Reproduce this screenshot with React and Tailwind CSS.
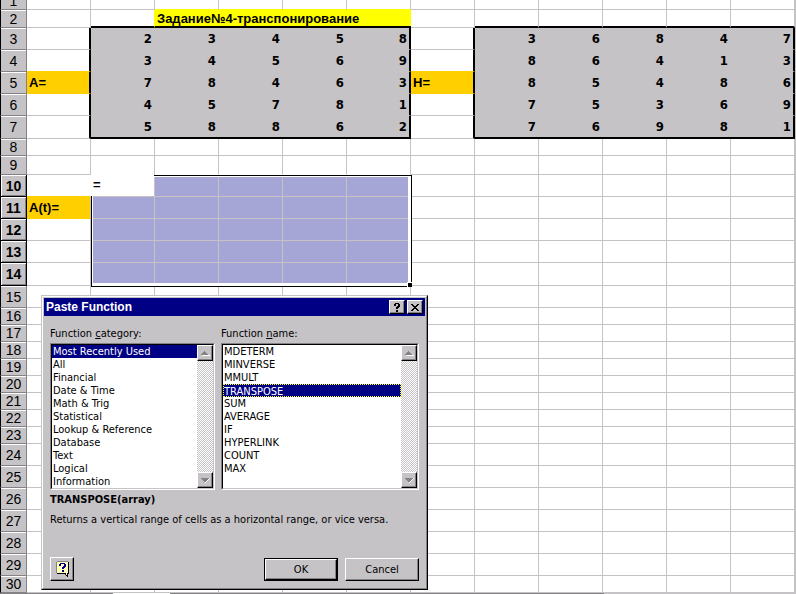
import React, { useState } from "react";
import clsx from "clsx";

const ROW_HEIGHTS = [
  18, 18, 22, 22, 22, 22, 23, 17, 19, 22, 22, 22, 22, 23, 22, 17, 17, 17, 17,
  17, 17, 17, 17, 22, 22, 22, 22, 22, 22, 17,
];
const COLUMNS = ["A", "B", "C", "D", "E", "F", "G", "H", "I", "J", "K", "L", "M"];

const MATRIX_A = [
  [2, 3, 4, 5, 8],
  [3, 4, 5, 6, 9],
  [7, 8, 4, 6, 3],
  [4, 5, 7, 8, 1],
  [5, 8, 8, 6, 2],
];
const MATRIX_H = [
  [3, 6, 8, 4, 7],
  [8, 6, 4, 1, 3],
  [8, 5, 4, 8, 6],
  [7, 5, 3, 6, 9],
  [7, 6, 9, 8, 1],
];
const LABELS = { A5: "A=", G5: "H=", A11: "A(t)=" };

const CATEGORIES = [
  "Most Recently Used",
  "All",
  "Financial",
  "Date & Time",
  "Math & Trig",
  "Statistical",
  "Lookup & Reference",
  "Database",
  "Text",
  "Logical",
  "Information",
];
const FUNCTIONS = [
  "MDETERM",
  "MINVERSE",
  "MMULT",
  "TRANSPOSE",
  "SUM",
  "AVERAGE",
  "IF",
  "HYPERLINK",
  "COUNT",
  "MAX",
];

const RAISED =
  "bg-[#c6c3c6] border border-t-white border-l-white border-r-black border-b-black shadow-[inset_-1px_-1px_0_#848284]";

const RowHeader = ({ row }) => {
  const active = row >= 10 && row <= 14;
  return (
    <th
      scope="row"
      className={clsx(
        "p-0 border-l border-l-black border-r border-b bg-[#c6c3c6] text-center text-sm leading-4 font-['Liberation_Sans',sans-serif]",
        active
          ? "font-bold border-r-black border-b-black shadow-[inset_1px_1px_0_#fff,inset_-1px_-1px_0_#848284]"
          : "font-normal border-r-[#848284] border-b-[#848284] shadow-[inset_0_1px_0_#fff]",
      )}
    >
      {row}
    </th>
  );
};

// frame of the selected range, anchored to its first cell
const Selection = () => (
  <div className="absolute left-0 top-0 z-10 w-[321px] h-[112px] border border-black">
    <div className="h-full border-t border-l border-r-3 border-b-3 border-white" />
    <div className="absolute -left-px -top-px w-[63px] h-[21px] bg-white pl-0.5 text-left leading-5 font-['Liberation_Sans',sans-serif]">
      =
    </div>
    <div className="absolute -right-px -bottom-px w-[5px] h-[5px] border-t border-l border-white bg-black" />
  </div>
);

const Cell = ({ col, row }) => {
  const letter = COLUMNS[col];
  const label = LABELS[letter + row];
  const inRows = row >= 3 && row <= 7;
  const inA = inRows && col >= 1 && col <= 5;
  const inH = inRows && col >= 7 && col <= 11;
  const inMatrix = inA || inH;
  const inSelection = row >= 10 && row <= 14 && col >= 1 && col <= 5;
  const matrixCol = (col >= 1 && col <= 5) || (col >= 7 && col <= 11);
  const matrixSide = col === 0 || col === 5 || col === 6 || col === 11;

  let value = label;
  if (inA) value = MATRIX_A[row - 3][col - 1];
  if (inH) value = MATRIX_H[row - 3][col - 7];

  // right edge
  let right = "border-r border-r-[#c6c3c6]";
  if (inRows && matrixSide) {
    right = "border-r-2 border-r-black";
  } else if (inMatrix) {
    right = "";
  } else if (row === 2 && col === 1) {
    right = "border-r border-r-[#ffff00]";
  } else if (row === 10 && col === 0) {
    right = "border-r border-r-white";
  }

  // bottom edge
  let bottom = "border-b border-b-[#c6c3c6]";
  if (matrixCol && (row === 2 || row === 7)) {
    bottom = "border-b-2 border-b-black";
  } else if (LABELS[letter + (row + 1)] || label) {
    bottom = "border-b border-b-[#ffcf00]";
  } else if (row === 9 && col >= 1 && col <= 5) {
    bottom = "border-b border-b-white";
  } else if (row === 1 && col >= 2 && col <= 5) {
    bottom = "border-b border-b-[#ffff00]";
  }

  return (
    <td
      className={clsx(
        "p-0 leading-4",
        right,
        bottom,
        inMatrix && "bg-[#c6c3c6] text-right",
        inMatrix && (matrixSide ? "pr-0.5" : "pr-[3px]"),
        label && "bg-[#ffcf00] pl-0.5 text-left font-['Liberation_Sans',sans-serif]",
        inSelection && "bg-[#a5a6d6]",
        row === 10 && col === 1 && "relative",
      )}
    >
      {value}
      {row === 10 && col === 1 && <Selection />}
    </td>
  );
};

const Sheet = () => (
  <table className="-mt-2 w-full table-fixed border-separate border-spacing-0 text-[13px] font-bold">
    <colgroup>
      <col className="w-[27px]" />
      {COLUMNS.map((letter) => (
        <col key={letter} className={letter === "M" ? "" : "w-16"} />
      ))}
    </colgroup>
    <tbody>
      {ROW_HEIGHTS.map((height, i) => {
        const row = i + 1;
        return (
          <tr key={row} style={{ height }}>
            <RowHeader row={row} />
            {COLUMNS.map((letter, col) => {
              if (row === 2 && col === 2) {
                return (
                  <td
                    key={letter}
                    colSpan={4}
                    className="p-0 pl-0.5 bg-[#ffff00] border-b-2 border-b-black leading-[15px] text-left text-[13px] whitespace-nowrap font-['Liberation_Sans',sans-serif]"
                  >
                    Задание№4-транспонирование
                  </td>
                );
              }
              if (row === 2 && col > 2 && col < 6) return null;
              return <Cell key={letter} col={col} row={row} />;
            })}
          </tr>
        );
      })}
    </tbody>
  </table>
);

const ScrollButton = ({ direction }) => (
  <button
    type="button"
    aria-label={`Scroll ${direction}`}
    className={clsx("flex h-4 w-4 items-center justify-center", RAISED)}
  >
    <svg width="9" height="6" viewBox="0 0 9 6" shapeRendering="crispEdges">
      {direction === "up" ? (
        <>
          <path d="M1 5h8v1H1z" fill="#fff" />
          <path d="M3 1h1v1h1v1h1v1h1v1H0V4h1V3h1V2h1z" fill="#848284" />
        </>
      ) : (
        <>
          <path d="M8 1h1v1H8v1H7v1H6v1H5v1H4V5h1V4h1V3h1V2h1z" fill="#fff" />
          <path d="M0 1h8v1H7v1H6v1H5v1H3V4H2V3H1V2H0z" fill="#848284" />
        </>
      )}
    </svg>
  </button>
);

const ListBox = ({ id, items, value, onChange, focused }) => (
  <div className="flex h-[147px] border border-t-[#848284] border-l-[#848284] border-r-white border-b-white bg-white">
    <div className="flex min-w-0 flex-1 border border-t-black border-l-black border-r-[#c6c3c6] border-b-[#c6c3c6]">
      <select
        id={id}
        size={11}
        value={value}
        onChange={(e) => onChange(e.target.value)}
        className="h-[143px] min-w-0 flex-1 appearance-none overflow-hidden rounded-none border-0 bg-white p-0 text-[11px] leading-[13px] text-black outline-none"
      >
        {items.map((item) => (
          <option
            key={item}
            value={item}
            className={clsx(
              "h-[13px] min-h-0 p-0 text-[11px] checked:bg-[linear-gradient(#000084,#000084)] checked:[-webkit-text-fill-color:#fff]",
              focused && item === value
                ? "border border-dotted border-[#ffff00] leading-[11px]"
                : "px-px leading-[13px]",
            )}
          >
            {item}
          </option>
        ))}
      </select>
      <div className="flex w-4 flex-col justify-between bg-[repeating-conic-gradient(#c6c3c6_0_25%,#fff_0_50%)] bg-[size:2px_2px]">
        <ScrollButton direction="up" />
        <ScrollButton direction="down" />
      </div>
    </div>
  </div>
);

const PasteFunction = () => {
  const [category, setCategory] = useState("Most Recently Used");
  const [fn, setFn] = useState("TRANSPOSE");

  return (
    <section
      role="dialog"
      aria-labelledby="dialog-title"
      className="absolute left-[41px] top-[295px] z-20 w-[387px] border border-t-[#c6c3c6] border-l-[#c6c3c6] border-r-black border-b-black bg-[#c6c3c6] text-[11px]"
    >
      <div className="border border-t-white border-l-white border-r-[#848284] border-b-[#848284] p-px">
        <header className="flex h-[18px] items-center bg-[#000084] px-0.5 text-white">
          <h1
            id="dialog-title"
            className="flex-1 text-xs leading-4 font-bold font-['Liberation_Sans',sans-serif]"
          >
            Paste Function
          </h1>
          <button
            type="button"
            aria-label="Help"
            className={clsx("flex h-3.5 w-4 items-center justify-center", RAISED)}
          >
            <svg width="8" height="9" viewBox="0 0 8 9" shapeRendering="crispEdges">
              <path
                d="M2 0h4v1h1v3H6v1H5v1H3V4h1V3h1V1H3v2H1V1h1zM3 7h2v2H3z"
                fill="#000"
              />
            </svg>
          </button>
          <button
            type="button"
            aria-label="Close"
            className={clsx("ml-0.5 flex h-3.5 w-4 items-center justify-center", RAISED)}
          >
            <svg width="8" height="7" viewBox="0 0 8 7" shapeRendering="crispEdges">
              <path
                d="M0 0h2v1h1v1h2V1h1V0h2v1H7v1H6v1H5v1h1v1h1v1h1v1H6V6H5V5H3v1H2v1H0V6h1V5h1V4h1V3H2V2H1V1H0z"
                fill="#000"
              />
            </svg>
          </button>
        </header>

        <div className="px-1.5 pt-2.5 pb-1.5">
          <div className="flex gap-1.5">
            <div className="w-[165px]">
              <label htmlFor="category" className="block pb-0.5 leading-[15px]">
                Function <u>c</u>ategory:
              </label>
              <ListBox
                id="category"
                items={CATEGORIES}
                value={category}
                onChange={setCategory}
              />
            </div>
            <div className="w-[198px]">
              <label htmlFor="function" className="block pb-0.5 leading-[15px]">
                Function <u>n</u>ame:
              </label>
              <ListBox
                id="function"
                items={FUNCTIONS}
                value={fn}
                onChange={setFn}
                focused
              />
            </div>
          </div>

          <p className="pt-0.5 leading-4 font-bold">{fn}(array)</p>
          <p className="h-[49px] pt-1 leading-[15px] whitespace-nowrap">
            Returns a vertical range of cells as a horizontal range, or vice versa.
          </p>

          <footer className="flex items-end gap-[7px]">
            <button
              type="button"
              aria-label="Office Assistant"
              className={clsx("mr-auto flex h-6 w-6 items-center justify-center", RAISED)}
            >
              <svg width="13" height="16" viewBox="0 0 13 16" shapeRendering="crispEdges">
                <defs>
                  <pattern id="paper" width="2" height="2" patternUnits="userSpaceOnUse">
                    <path d="M0 0h2v2H0z" fill="#fff" />
                    <path d="M0 0h1v1H0zM1 1h1v1H1z" fill="#ffff73" />
                  </pattern>
                </defs>
                <path d="M12 1h1v12h-1v3h-1v-1h-1v-1H9v-1H1v-1h11z" fill="#000" />
                <path d="M0 1h1v11H0zM1 0h11v1H1z" fill="#848284" />
                <path d="M1 1h11v11h-1v2h-1v-2H1z" fill="url(#paper)" />
                <path
                  d="M4 2h5v1h1v3H9v1H8v1H6V6h1V5h1V3H5v2H3V3h1zM6 9h2v2H6z"
                  fill="#000084"
                />
              </svg>
            </button>
            <button type="button" className="h-[23px] w-[74px] border border-black">
              <span className={clsx("block h-full leading-[19px]", RAISED, "border-r-[#848284] border-b-[#848284]")}>
                OK
              </span>
            </button>
            <button type="button" className={clsx("h-[23px] w-[74px] leading-5", RAISED)}>
              Cancel
            </button>
          </footer>
        </div>
      </div>
    </section>
  );
};

const App = () => (
  <main className="relative min-h-screen overflow-hidden bg-white text-black font-['DejaVu_Sans_Condensed','DejaVu_Sans',sans-serif]">
    <Sheet />
    <div className="flex h-px bg-[#c6c3c6]">
      <div className="w-[113px] bg-[#848284]" />
      <div className="w-[57px] bg-white" />
      <div className="w-[434px] bg-[#848284]" />
    </div>
    <PasteFunction />
  </main>
);

export default App;
